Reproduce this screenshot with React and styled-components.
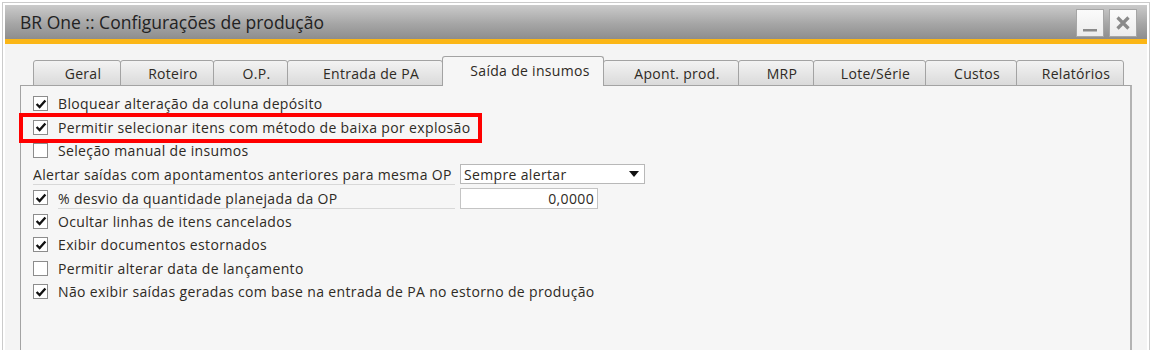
import React from "react";
import styled, { createGlobalStyle } from "styled-components";

const GlobalStyle = createGlobalStyle`
  html, body {
    margin: 0;
    padding: 0;
    background: #ffffff;
  }
  body {
    font-family: "Open Sans", "Noto Sans", Arial, sans-serif;
    color: #2e2e2e;
  }
`;

const tabs = [
  { label: "Geral", width: 87 },
  { label: "Roteiro", width: 93 },
  { label: "O.P.", width: 74 },
  { label: "Entrada de PA", width: 155 },
  { label: "Saída de insumos", width: 161, active: true },
  { label: "Apont. prod.", width: 135 },
  { label: "MRP", width: 75 },
  { label: "Lote/Série", width: 112 },
  { label: "Custos", width: 91 },
  { label: "Relatórios", width: 107 },
];

const CheckBox = ({ checked }) => (
  <StCheck>
    {checked && (
      <svg width="12" height="12" viewBox="0 0 12 12">
        <path d="M1.6 6 L4.6 9 L10.4 2.4" fill="none" stroke="#111" strokeWidth="2.3" />
      </svg>
    )}
  </StCheck>
);

const App = () => {
  return (
    <>
      <GlobalStyle />
      <StShell>
        <StTitleBar>
          <StTitle>BR One :: Configurações de produção</StTitle>
          <StButtons>
            <StWinButton>
              <svg width="26" height="26" viewBox="0 0 26 26">
                <rect x="6" y="19" width="14" height="2.5" fill="#8a8a8a" />
              </svg>
            </StWinButton>
            <StWinButton>
              <svg width="26" height="26" viewBox="0 0 26 26">
                <path d="M7.5 7.5 L18.5 18.5 M18.5 7.5 L7.5 18.5" stroke="#8a8a8a" strokeWidth="3.2" />
              </svg>
            </StWinButton>
          </StButtons>
        </StTitleBar>

        <StBody>
          <StTabRow>
            {tabs.map((t) => (
              <StTab key={t.label} $active={t.active} $width={t.width}>
                {t.label}
              </StTab>
            ))}
          </StTabRow>

          <StPanel>
            <StRow>
              <CheckBox checked />
              <StText>Bloquear alteração da coluna depósito</StText>
            </StRow>
            <StRow $highlight>
              <CheckBox checked />
              <StText>Permitir selecionar itens com método de baixa por explosão</StText>
            </StRow>
            <StRow>
              <CheckBox />
              <StText>Seleção manual de insumos</StText>
            </StRow>
            <StRow>
              <StLabel $width={422}>Alertar saídas com apontamentos anteriores para mesma OP</StLabel>
              <StSelect>
                <span>Sempre alertar</span>
                <svg width="10" height="6" viewBox="0 0 10 6">
                  <path d="M0 0 L10 0 L5 6 Z" fill="#111" />
                </svg>
              </StSelect>
            </StRow>
            <StRow>
              <CheckBox checked />
              <StLabel $width={397}>% desvio da quantidade planejada da OP</StLabel>
              <StInput>0,0000</StInput>
            </StRow>
            <StRow>
              <CheckBox checked />
              <StText>Ocultar linhas de itens cancelados</StText>
            </StRow>
            <StRow>
              <CheckBox checked />
              <StText>Exibir documentos estornados</StText>
            </StRow>
            <StRow>
              <CheckBox />
              <StText>Permitir alterar data de lançamento</StText>
            </StRow>
            <StRow>
              <CheckBox checked />
              <StText>Não exibir saídas geradas com base na entrada de PA no estorno de produção</StText>
            </StRow>
          </StPanel>
        </StBody>
      </StShell>
    </>
  );
};

export default App;

const StShell = styled.div`
  margin: 2px 3px 0 2px;
  height: 348px;
  border: 1px solid #cbcbcb;
  border-bottom: none;
  padding: 2px 2px 0 2px;
  box-sizing: border-box;
  display: flex;
  flex-direction: column;
  overflow: hidden;
`;

const StTitleBar = styled.div`
  height: 34px;
  flex: none;
  display: flex;
  align-items: center;
  justify-content: space-between;
  background: linear-gradient(#cbcbcb, #a6a6a6 55%, #8d8d8d);
  border-bottom: 5px solid #fbb616;
`;

const StTitle = styled.div`
  padding-left: 15px;
  font-size: 17.5px;
  color: #222;
`;

const StButtons = styled.div`
  display: flex;
  gap: 5px;
  margin-right: 10px;
  padding-top: 2px;
`;

const StWinButton = styled.div`
  width: 28px;
  height: 28px;
  box-sizing: border-box;
  border: 1px solid #a6a6a6;
  background: linear-gradient(#fbfbfb, #ececec);
  display: flex;
  align-items: center;
  justify-content: center;
`;

const StBody = styled.div`
  flex: 1;
  background: #f4f4f4;
  padding: 13px 15px 0 15px;
  display: flex;
  flex-direction: column;
`;

const StTabRow = styled.div`
  display: flex;
  align-items: flex-end;
  height: 29px;
  padding-left: 14px;
  position: relative;
  z-index: 1;
  margin-bottom: -1px;
`;

const StTab = styled.div`
  width: ${(p) => p.$width + 1}px;
  height: ${(p) => (p.$active ? 30 : 26)}px;
  box-sizing: border-box;
  border: 1px solid #a3a3a3;
  border-bottom: ${(p) => (p.$active ? "none" : "1px solid #a3a3a3")};
  border-radius: 3px 3px 0 0;
  margin-left: -1px;
  background: ${(p) =>
    p.$active ? "#f6f6f6" : "linear-gradient(#f3f3f3, #e4e4e4 60%, #dadada)"};
  display: flex;
  align-items: center;
  justify-content: center;
  padding: ${(p) => (p.$active ? "0 0 3px 14px" : "0 0 0 12px")};
  font-size: 14px;
  letter-spacing: 0.3px;
  color: #2e2a24;
  white-space: nowrap;
`;

const StPanel = styled.div`
  flex: 1;
  background: #f6f6f6;
  border: 1px solid #a3a3a3;
  border-right: 2px solid #b3b3b3;
  border-bottom: none;
  padding: 6px 0 0 12px;
`;

const StRow = styled.div`
  position: relative;
  height: 23.5px;
  display: flex;
  align-items: center;
  font-size: 14px;
  letter-spacing: 0.35px;

  ${(p) =>
    p.$highlight &&
    `
    &::after {
      content: "";
      position: absolute;
      left: -14px;
      top: -3px;
      width: 463px;
      height: 30px;
      box-sizing: border-box;
      border: 4px solid #ff0000;
      pointer-events: none;
    }
  `}
`;

const StCheck = styled.div`
  width: 15px;
  height: 15px;
  flex: none;
  box-sizing: border-box;
  border: 1px solid #8c8c8c;
  background: #fff;
  margin-right: 10px;
  display: flex;
  align-items: center;
  justify-content: center;
`;

const StText = styled.span`
  white-space: nowrap;
  color: #2e2a24;
`;

const StLabel = styled.div`
  width: ${(p) => p.$width}px;
  height: 20px;
  box-sizing: border-box;
  border-bottom: 1px solid #d8d8d8;
  white-space: nowrap;
  overflow: hidden;
  color: #2e2a24;
  line-height: 19px;
  margin-top: 2px;
`;

const StSelect = styled.div`
  margin-left: 5px;
  width: 185px;
  height: 20px;
  box-sizing: border-box;
  border: 1px solid #b8b8b8;
  background: #fff;
  display: flex;
  align-items: center;
  justify-content: space-between;
  padding: 0 5px 0 3px;
  color: #2e2a24;
`;

const StInput = styled.div`
  margin-left: 5px;
  margin-top: 1px;
  width: 138px;
  height: 21px;
  box-sizing: border-box;
  border: 1px solid #c4c4c4;
  background: #fff;
  text-align: right;
  padding-right: 3px;
  line-height: 19px;
  color: #2e2a24;
`;
